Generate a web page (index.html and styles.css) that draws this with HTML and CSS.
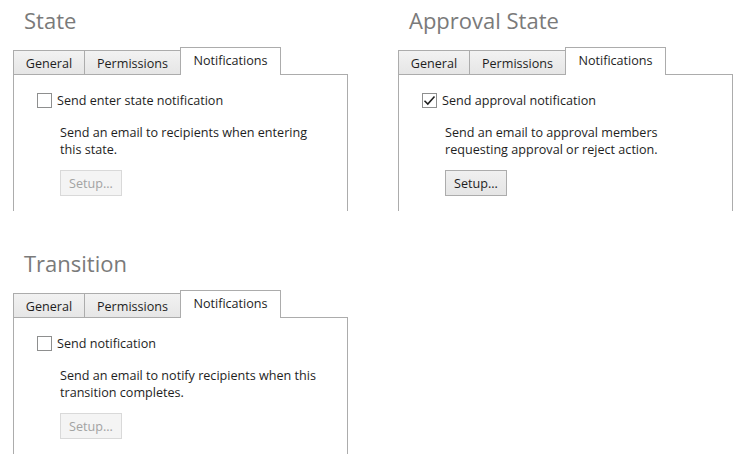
FILE: index.html
```html
<!DOCTYPE html>
<html lang="en">

<head>
    <meta charset="UTF-8">
    <title>Notifications</title>
    <link rel="stylesheet" href="styles.css">
</head>

<body>
    <main class="board">
        <section class="pane">
            <h2 class="title">State</h2>
            <nav class="tabs">
                <span class="tab tab-general">General</span>
                <span class="tab tab-perm">Permissions</span>
                <span class="tab tab-notif active">Notifications</span>
            </nav>
            <div class="panel">
                <label class="check">
                    <span class="box"></span>
                    Send enter state notification
                </label>
                <p class="desc">Send an email to recipients when entering<br>this state.</p>
                <button class="setup" disabled>Setup...</button>
            </div>
        </section>

        <section class="pane">
            <h2 class="title">Approval State</h2>
            <nav class="tabs">
                <span class="tab tab-general">General</span>
                <span class="tab tab-perm">Permissions</span>
                <span class="tab tab-notif active">Notifications</span>
            </nav>
            <div class="panel">
                <label class="check">
                    <span class="box checked">
                        <svg width="13" height="13" viewBox="0 0 13 13">
                            <path d="M1.5 6.8 L4.8 10 L11.5 2.5" fill="none" stroke="#222" stroke-width="1.6"/>
                        </svg>
                    </span>
                    Send approval notification
                </label>
                <p class="desc">Send an email to approval members<br>requesting approval or reject action.</p>
                <button class="setup">Setup...</button>
            </div>
        </section>

        <section class="pane">
            <h2 class="title">Transition</h2>
            <nav class="tabs">
                <span class="tab tab-general">General</span>
                <span class="tab tab-perm">Permissions</span>
                <span class="tab tab-notif active">Notifications</span>
            </nav>
            <div class="panel">
                <label class="check">
                    <span class="box"></span>
                    Send notification
                </label>
                <p class="desc">Send an email to notify recipients when this<br>transition completes.</p>
                <button class="setup" disabled>Setup...</button>
            </div>
        </section>
    </main>
</body>

</html>
```

FILE: styles.css
```css
body {
    margin: 0;
    background: #ffffff;
    font-family: "Open Sans", "Noto Sans", sans-serif;
    font-size: 12.6px;
    color: #1e1e1e;
}

.board {
    display: grid;
    grid-template-columns: 335px 335px;
    column-gap: 50px;
    row-gap: 32px;
    padding-left: 13px;
}

.title {
    margin: 0;
    height: 47px;
    padding-left: 11px;
    box-sizing: border-box;
    padding-top: 6px;
    font-size: 22px;
    font-weight: normal;
    line-height: 28px;
    color: #7a7a7a;
}

.tabs {
    display: flex;
    align-items: flex-end;
    height: 27px;
}

.tab {
    display: flex;
    align-items: center;
    justify-content: center;
    box-sizing: border-box;
    height: 24px;
    padding-top: 2px;
    border: 1px solid #acacac;
    border-bottom: none;
    border-right: none;
    background: linear-gradient(#f2f2f2, #e6e6e6);
}

.tab-general {
    width: 71px;
}

.tab-perm {
    width: 96px;
}

.tab-notif {
    width: 101px;
    border-right: 1px solid #acacac;
}

.tab.active {
    position: relative;
    z-index: 1;
    height: 28px;
    margin-bottom: -1px;
    padding-top: 0;
    padding-bottom: 3px;
    background: #ffffff;
}

.panel {
    height: 137px;
    box-sizing: border-box;
    border: 1px solid #acacac;
    border-bottom: none;
    padding: 17px 0 0 23px;
}

.check {
    display: flex;
    align-items: center;
    gap: 5px;
    height: 16px;
}

.box {
    display: flex;
    align-items: center;
    justify-content: center;
    width: 15px;
    height: 15px;
    box-sizing: border-box;
    border: 1px solid #8e8f8f;
    background: #ffffff;
}

.desc {
    margin: 16px 0 0 23px;
    line-height: 17px;
}

.setup {
    display: block;
    margin: 12px 0 0 23px;
    width: 62px;
    height: 26px;
    padding: 0;
    font-family: inherit;
    font-size: 12.6px;
    color: #1e1e1e;
    border: 1px solid #acacac;
    background: linear-gradient(#f0f0f0, #e5e5e5);
}

.setup:disabled {
    color: #a3a3a3;
    border-color: #d9d9d9;
    background: #f4f4f4;
}
```
